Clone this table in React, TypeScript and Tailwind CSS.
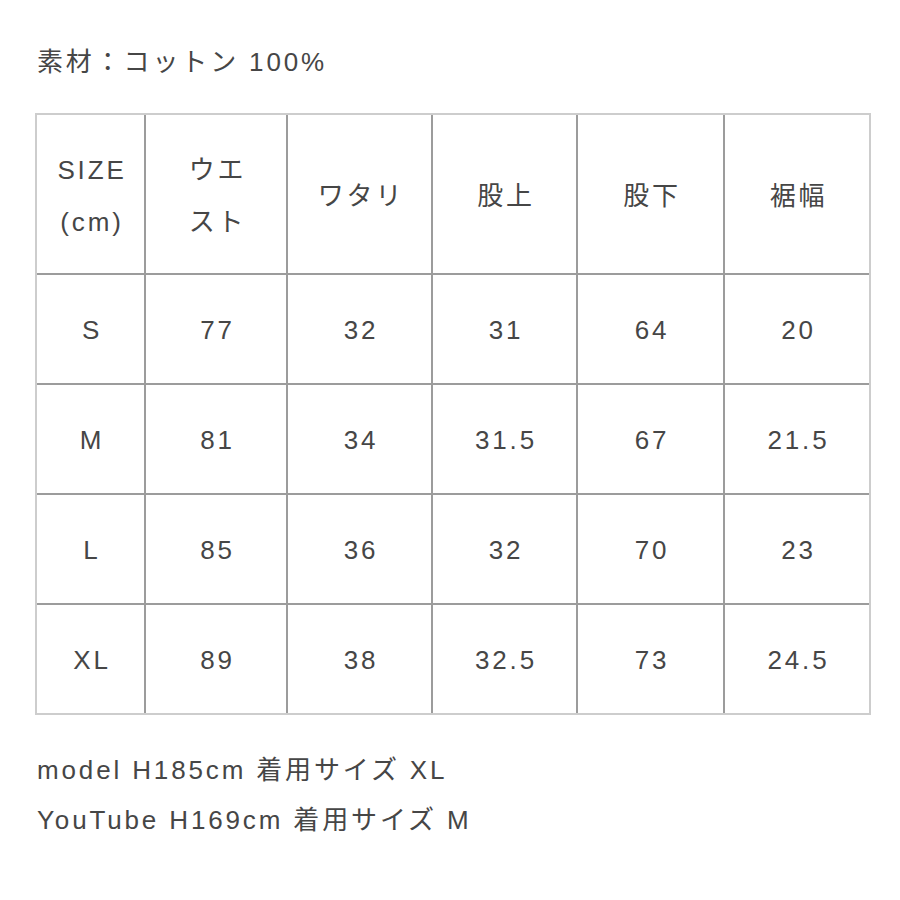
import React from 'react';

const header = [['SIZE', '(cm)'], ['ウエ', 'スト'], ['ワタリ'], ['股上'], ['股下'], ['裾幅']];

const rows = [
    ['S', '77', '32', '31', '64', '20'],
    ['M', '81', '34', '31.5', '67', '21.5'],
    ['L', '85', '36', '32', '70', '23'],
    ['XL', '89', '38', '32.5', '73', '24.5'],
];

const colWidths = ['w-[109px]', 'w-[142px]', 'w-[145px]', 'w-[145px]', 'w-[147px]', 'w-[144px]'];

export default function App() {
    return (
        <div className="w-[900px] h-[900px] bg-white text-[#464646] text-[26px] tracking-[0.11em] font-['Liberation_Sans','Noto_Sans_CJK_JP',sans-serif]">
            <div className="pt-[44px] pl-[37px] h-[113px] leading-[36px]">素材：コットン 100%</div>

            {/* size table */}
            <div className="ml-[35px] w-[836px] border-2 border-[#cdcdcd] flex flex-col">
                <div className="flex h-[160px] border-b-2 border-[#9c9c9c]">
                    {header.map((lines, i) => (
                        <div
                            key={i}
                            className={`${colWidths[i]} flex flex-col items-center justify-center pt-[4px] pl-[3px] leading-[52px] ${i < 5 ? 'border-r-2 border-[#9c9c9c]' : ''}`}
                        >
                            {lines.map((l) => (
                                <span key={l}>{l}</span>
                            ))}
                        </div>
                    ))}
                </div>
                {rows.map((row, r) => (
                    <div key={row[0]} className={`flex ${r < 3 ? 'h-[110px] border-b-2 border-[#9c9c9c]' : 'h-[108px]'}`}>
                        {row.map((v, i) => (
                            <div
                                key={i}
                                className={`${colWidths[i]} flex items-center justify-center pt-[3px] pl-[3px] ${i < 5 ? 'border-r-2 border-[#9c9c9c]' : ''}`}
                            >
                                {v}
                            </div>
                        ))}
                    </div>
                ))}
            </div>

            <div className="pl-[37px] pt-[30px] leading-[50px]">
                <p>model H185cm 着用サイズ XL</p>
                <p>YouTube H169cm 着用サイズ M</p>
            </div>
        </div>
    );
}
